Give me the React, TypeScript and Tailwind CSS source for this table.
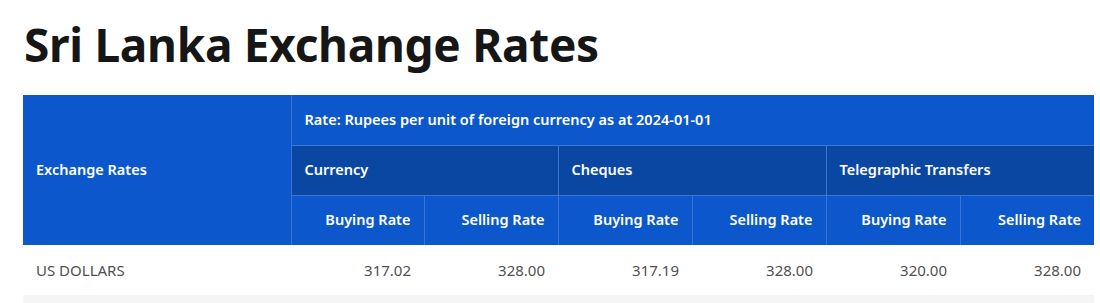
const rates = [
  { name: 'US DOLLARS', values: ['317.02', '328.00', '317.19', '328.00', '320.00', '328.00'] },
  { name: 'AUSTRALIAN DOLLARS', values: ['211.93', '224.48', '212.40', '224.48', '213.90', '224.48'] },
]

export default function App() {
  return (
    <div className="min-h-screen bg-white pl-[23px] font-['Noto_Sans',sans-serif]">
      <h1 className="pt-[12px] pl-px text-[46px] leading-[64px] font-bold tracking-[-0.3px] text-[#161616]">
        Sri Lanka Exchange Rates
      </h1>
      <table className="mt-[19px] w-[1071px] table-fixed border-collapse text-[14.5px]">
        <colgroup>
          <col className="w-[268px]" />
          <col className="w-[133px]" />
          <col className="w-[134px]" />
          <col className="w-[134px]" />
          <col className="w-[134px]" />
          <col className="w-[134px]" />
          <col className="w-[134px]" />
        </colgroup>
        <thead className="text-white font-semibold">
          <tr className="h-[50px] bg-[#0b57cb]">
            <th rowSpan={3} className="border-r border-[#3a75d6] px-[13px] text-left font-semibold">
              Exchange Rates
            </th>
            <th colSpan={6} className="px-[13px] text-left font-semibold">
              Rate: Rupees per unit of foreign currency as at 2024-01-01
            </th>
          </tr>
          <tr className="h-[50px] bg-[#0a47a3]">
            <th colSpan={2} className="border-t border-r border-[#3a75d6] px-[13px] text-left font-semibold">
              Currency
            </th>
            <th colSpan={2} className="border-t border-r border-[#3a75d6] px-[13px] text-left font-semibold">
              Cheques
            </th>
            <th colSpan={2} className="border-t border-[#3a75d6] px-[13px] text-left font-semibold">
              Telegraphic Transfers
            </th>
          </tr>
          <tr className="h-[50px] bg-[#0b57cb]">
            {['Buying Rate', 'Selling Rate', 'Buying Rate', 'Selling Rate', 'Buying Rate', 'Selling Rate'].map(
              (label, i) => (
                <th
                  key={i}
                  className={
                    i < 5
                      ? 'border-t border-r border-[#3a75d6] px-[13px] text-right font-semibold'
                      : 'border-t border-[#3a75d6] px-[13px] text-right font-semibold'
                  }
                >
                  {label}
                </th>
              ),
            )}
          </tr>
        </thead>
        <tbody className="text-[#505050] text-[15px]">
          {rates.map((row, idx) => (
            <tr key={row.name} className={idx % 2 === 0 ? 'h-[50px] bg-white' : 'h-[50px] bg-[#f5f5f5]'}>
              <td className="px-[13px]">{row.name}</td>
              {row.values.map((v, i) => (
                <td key={i} className="px-[13px] text-right">
                  {v}
                </td>
              ))}
            </tr>
          ))}
        </tbody>
      </table>
    </div>
  )
}
